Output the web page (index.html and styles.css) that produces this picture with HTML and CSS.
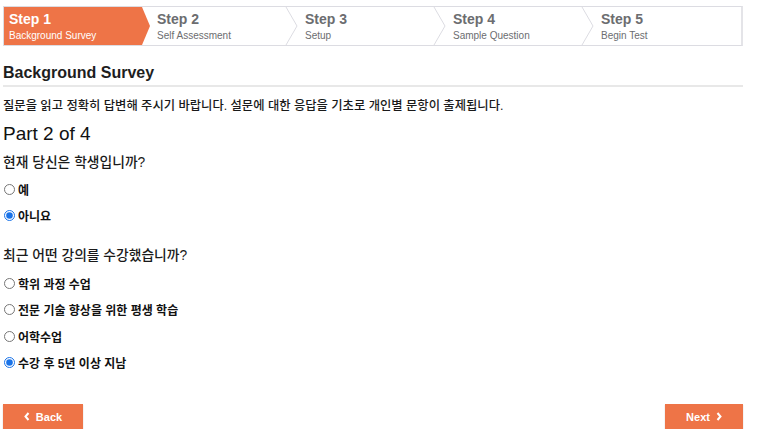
FILE: index.html
```html
<!DOCTYPE html>
<html lang="ko">
<head>
<meta charset="utf-8">
<title>Background Survey</title>
<link rel="stylesheet" href="styles.css">
</head>
<body>
<div class="page">
  <ol class="steps">
    <li class="step active">
      <span class="step-title">Step 1</span>
      <span class="step-sub">Background Survey</span>
    </li>
    <li class="step">
      <span class="step-title">Step 2</span>
      <span class="step-sub">Self Assessment</span>
      <svg class="chev" width="14" height="38" viewBox="0 0 14 38"><polyline points="1,0 12,19 1,38" fill="none" stroke="#dcdce2" stroke-width="1"/></svg>
    </li>
    <li class="step">
      <span class="step-title">Step 3</span>
      <span class="step-sub">Setup</span>
      <svg class="chev" width="14" height="38" viewBox="0 0 14 38"><polyline points="1,0 12,19 1,38" fill="none" stroke="#dcdce2" stroke-width="1"/></svg>
    </li>
    <li class="step">
      <span class="step-title">Step 4</span>
      <span class="step-sub">Sample Question</span>
      <svg class="chev" width="14" height="38" viewBox="0 0 14 38"><polyline points="1,0 12,19 1,38" fill="none" stroke="#dcdce2" stroke-width="1"/></svg>
    </li>
    <li class="step">
      <span class="step-title">Step 5</span>
      <span class="step-sub">Begin Test</span>
    </li>
  </ol>

  <h2 class="heading">Background Survey</h2>
  <p class="intro">질문을 읽고 정확히 답변해 주시기 바랍니다. 설문에 대한 응답을 기초로 개인별 문항이 출제됩니다.</p>
  <h3 class="part">Part 2 of 4</h3>

  <div class="question">
    <p class="q-text">현재 당신은 학생입니까?</p>
    <label class="opt"><input type="radio" name="q1"><span>예</span></label>
    <label class="opt"><input type="radio" name="q1" checked><span>아니요</span></label>
  </div>

  <div class="question q2">
    <p class="q-text">최근 어떤 강의를 수강했습니까?</p>
    <label class="opt"><input type="radio" name="q2"><span>학위 과정 수업</span></label>
    <label class="opt"><input type="radio" name="q2"><span>전문 기술 향상을 위한 평생 학습</span></label>
    <label class="opt"><input type="radio" name="q2"><span>어학수업</span></label>
    <label class="opt"><input type="radio" name="q2" checked><span>수강 후 5년 이상 지남</span></label>
  </div>

  <div class="footer">
    <button class="btn" type="button"><svg width="6" height="9" viewBox="0 0 6 9"><polyline points="4.5,1 1.5,4.5 4.5,8" fill="none" stroke="#fff" stroke-width="2"/></svg>Back</button>
    <button class="btn" type="button">Next<svg width="6" height="9" viewBox="0 0 6 9"><polyline points="1.5,1 4.5,4.5 1.5,8" fill="none" stroke="#fff" stroke-width="2"/></svg></button>
  </div>
</div>
</body>
</html>
```

FILE: styles.css
```css
* { box-sizing: border-box; }

html, body {
  margin: 0;
  padding: 0;
  background: #ffffff;
}

body {
  font-family: "Liberation Sans", Arial, "Noto Sans CJK KR", sans-serif;
  color: #222222;
}

.page {
  width: 740px;
  margin: 0 0 0 3px;
  padding-top: 6px;
}

.steps {
  list-style: none;
  margin: 0;
  padding: 0;
  display: flex;
  height: 40px;
  border: 1px solid #dcdce2;
  border-right: 2px solid #e4e4e8;
}

.step {
  position: relative;
  width: 148px;
  flex: none;
  display: flex;
  flex-direction: column;
  padding: 4px 0 0 5px;
  color: #6c6d70;
}

.step:last-child { flex: 1; }

.step.active {
  background: #ee7447;
  color: #ffffff;
  clip-path: polygon(0 0, calc(100% - 10px) 0, calc(100% - 2px) 50%, calc(100% - 10px) 100%, 0 100%);
}

.step-title {
  font-weight: bold;
  font-size: 14px;
  line-height: 17px;
}

.step-sub {
  font-size: 10px;
  line-height: 13px;
  margin-top: 1px;
}

.step .chev {
  position: absolute;
  right: 1px;
  top: 0;
}

.heading {
  margin: 17px 0 0 0;
  font-size: 16px;
  line-height: 20px;
  font-weight: bold;
  color: #1e1e1e;
  padding-bottom: 2px;
  border-bottom: 2px solid #e8e8e8;
}

.intro {
  margin: 10px 0 0 0;
  font-family: "Liberation Sans", "Noto Sans CJK KR", sans-serif;
  font-size: 12.3px;
  font-weight: 500;
  line-height: 18px;
  color: #1a1a1a;
}

.part {
  margin: 8px 0 0 0;
  font-size: 19px;
  line-height: 22px;
  font-weight: normal;
  color: #111111;
}

.question {
  display: flex;
  flex-direction: column;
}

.q-text {
  margin: 8px 0 3px 0;
  font-family: "Liberation Sans", "Noto Sans CJK KR", sans-serif;
  font-size: 13.8px;
  font-weight: 500;
  line-height: 20px;
  color: #1a1a1a;
}

.q2 .q-text {
  margin-top: 17px;
  margin-bottom: 4px;
}

.opt {
  display: flex;
  align-items: center;
  height: 26.5px;
  font-family: "Liberation Sans", "Noto Sans CJK KR", sans-serif;
  font-size: 12px;
  font-weight: bold;
  color: #111111;
}

.opt input {
  width: 11px;
  height: 11px;
  margin: 0 3px 0 1px;
  accent-color: #1a73e8;
}

.footer {
  display: flex;
  justify-content: space-between;
  margin-top: 28px;
}

.btn {
  width: 80px;
  height: 25px;
  border: none;
  background: #ee7447;
  box-shadow: 0 1px 1px rgba(0,0,0,0.25);
  color: #ffffff;
  font-family: "Liberation Sans", Arial, sans-serif;
  font-weight: bold;
  font-size: 11px;
  display: flex;
  align-items: center;
  justify-content: center;
  gap: 6px;
  padding: 0;
}

.btn:last-child { width: 78px; }
```
